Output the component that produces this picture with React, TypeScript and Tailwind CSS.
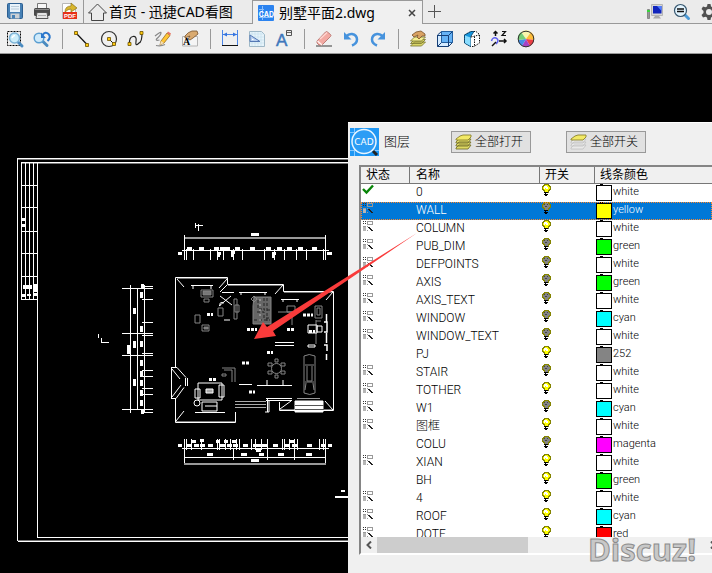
import { useState, type ReactNode } from "react";

const icons: Record<string, ReactNode> = {
  save: (
    <>
      <path d="M2.500 3.500q0-1 1-1h13q1 0 1 1v13q0 1-1 1H4l-1.500-1.500z" fill="#4680b5" stroke="#2d5f91" />
      <rect x="5" y="3" width="10" height="8" fill="#e8f2fa" />
      <path d="M6 5.500h8M6 8h8" stroke="#b8cad8" />
      <path d="M5.500 12.500h9V17.500h-9z" fill="#cbd0d5" />
      <path d="M7 14h3v3.500H7z" fill="#4680b5" />
    </>
  ),
  print: (
    <>
      <path d="M5.500 2.500h9V8h-9z" fill="#f7f7f7" stroke="#777" />
      <rect x="2" y="7" width="16" height="8" rx="1.500" fill="#4a4a4a" />
      <path d="M3 8.500h14" stroke="#8a8a8a" />
      <path d="M5 11.500h10l1 6H4z" fill="#e4e4e4" stroke="#555" />
      <path d="M6 14.500h8" stroke="#aaa" />
    </>
  ),
  pdf: (
    <>
      <path d="M3.500 2.500h9l4 4v11h-13z" fill="#fff" stroke="#b8b8b8" />
      <rect x="4" y="11" width="14" height="7" fill="#e83018" />
      <text x="5" y="17" fontSize="6" fontWeight="bold" fill="#fff" fontFamily="Liberation Sans, sans-serif">PDF</text>
      <path d="M6 11q0-6 6-6V2l6 5-6 4V8q-3 0-6 3z" fill="#d9b62c" stroke="#8b741b" strokeWidth=".7" />
    </>
  ),
  zoomWindow: (
    <>
      <path d="M2.500 2.500h13v14h-13z" fill="none" stroke="#000" strokeDasharray="2 1" />
      <path d="m13 13 4 4" stroke="#4b8bc0" strokeWidth="3" strokeLinecap="round" />
      <circle cx="9.500" cy="9" r="5" fill="#cdeefa" stroke="#7db3d6" strokeWidth="1.500" />
      <path d="M7 9q1-2.500 3-2.500" stroke="#fff" fill="none" strokeWidth="1.500" />
    </>
  ),
  zoomPrev: (
    <>
      <path d="m11 12.500 4 4" stroke="#4b8bc0" strokeWidth="3" strokeLinecap="round" />
      <circle cx="7" cy="9" r="4.800" fill="#cfeafa" stroke="#5a9ed1" strokeWidth="1.500" />
      <path d="M10.500 6q3-4 6-1t-1 7" fill="none" stroke="#2c78cc" strokeWidth="2" />
      <path d="M9 3.500V9h5z" fill="#2c78cc" />
    </>
  ),
  line: (
    <>
      <path d="m4 4 11 11.500" stroke="#111" strokeWidth="1.200" />
      <path d="M2.500 2.500h3v3h-3zM13.500 14.500h3v3h-3z" fill="#ffc90e" stroke="#6c5300" strokeWidth=".8" />
    </>
  ),
  circle: (
    <>
      <circle cx="10" cy="10" r="7.500" fill="none" stroke="#333" strokeWidth="1.200" />
      <path d="m10 10 5 5" stroke="#111" />
      <path d="M8.500 8.500h3v3h-3zM13.500 13.500h3v3h-3z" fill="#ffc90e" stroke="#6c5300" strokeWidth=".8" />
    </>
  ),
  curve: (
    <>
      <path d="M3.500 15Q3 8 7 7.500t3 5 3 1.500q3-1 3-9.500" fill="none" stroke="#222" strokeWidth="1.200" />
      <path d="M2 13.500h3v3H2zM14 2.500h3v3h-3z" fill="#ffc90e" stroke="#6c5300" strokeWidth=".8" />
    </>
  ),
  pencil: (
    <>
      <path d="M2 7q6-5 6-3T3.500 10q-1 2 3 1M3 16.500q5 1 9-1" fill="none" stroke="#888" strokeWidth="1.200" />
      <path d="m8 12 6-8 3 2.500-6 7.500-4 2z" fill="#ffc636" stroke="#9b6c20" strokeWidth=".8" />
      <path d="m14 4 1-1.500 3 2L17 6.500z" fill="#e67462" />
      <path d="m8 12 3 2-4 2z" fill="#f4dfb8" />
    </>
  ),
  textEdit: (
    <>
      <path d="M2.500 7.500h15v9.500h-15z" fill="#f5f5f5" stroke="#b4b4b4" />
      <path d="M5 7q3-4 7-5h5l1 3-5 4-3 2-2-1 2-3-5 2z" fill="#d9aa70" stroke="#77532f" strokeWidth=".8" />
      <text x="3" y="16" fontSize="10" fontWeight="bold" fontFamily="Liberation Serif, serif">A</text>
    </>
  ),
  dimension: (
    <>
      <path d="M2.500 1v16M17.500 1v16M3 5.500h14" stroke="#4a86e8" />
      <path d="m3 5.500 4-2v4zM17 5.500l-4-2v4z" fill="#3675df" />
      <path d="M2 16.500h16" stroke="#111" />
    </>
  ),
  area: (
    <>
      <path d="M2.500 2.500h12l3 3v12h-15z" fill="#e6f3fa" stroke="#9fb8c7" />
      <path d="M5 3v14M8 3v14M11 3v14M14 3v14M3 5h14M3 8h14M3 11h14M3 14h14" stroke="#bed9e8" strokeWidth=".5" />
      <path d="M3 6v6.500h10z" fill="#b8cfef" stroke="#5578b4" />
      <path d="M5 9.500V11h2.500z" fill="#fff" />
    </>
  ),
  label: (
    <>
      <text x="2" y="17" fontSize="17" fill="#4078bc" stroke="#4078bc" strokeWidth=".5" fontFamily="Liberation Sans, sans-serif">A</text>
      <path d="M12.500 1.500h5v5h-5z" fill="#eee" stroke="#555" />
      <path d="M13 3.500h4" stroke="#666" />
    </>
  ),
  eraser: (
    <>
      <path d="M2 17h16" stroke="#777" strokeWidth="1.500" />
      <path d="m3 12 8.500-9q1-1 2 0l3 2.500q1 1 0 2L8 16H5l-2-2z" fill="#f3aaa3" stroke="#b06b66" strokeWidth=".8" />
      <path d="m3.500 12 4.500 4" stroke="#fff0ee" strokeWidth="1.500" />
      <path d="m6 10 7-6.500" stroke="#ffd6d1" strokeWidth="1.500" />
    </>
  ),
  undo: (
    <>
      <path d="M5 7.500q3-3 6-2.500 5 1 5 5.500 0 4-5 6" fill="none" stroke="#4793dd" strokeWidth="2.500" />
      <path d="M3 3v7.500h7.500z" fill="#4793dd" />
    </>
  ),
  redo: (
    <>
      <path d="M15 7.500q-3-3-6-2.500-5 1-5 5.500 0 4 5 6" fill="none" stroke="#4793dd" strokeWidth="2.500" />
      <path d="M17 3v7.500H9.500z" fill="#4793dd" />
    </>
  ),
  layers: (
    <>
      <path d="m2.500 17 4-4h11l-4 4zM2.500 14.500l4-4h11l-4 4z" fill="#d9d568" stroke="#77732d" strokeWidth=".8" />
      <path d="m2.500 12 4-4h11l-4 4z" fill="#f4ee91" stroke="#77732d" strokeWidth=".8" />
      <path d="m4 6 4-3 5-1 4 3v2h-3l-3 3-2-2 1-2-4 2z" fill="#d9a263" stroke="#775027" strokeWidth=".8" />
    </>
  ),
  box: (
    <>
      <path d="m2.500 6 4-3.500h11v11l-4 4h-11z" fill="#d5ebff" stroke="#163f77" />
      <path d="M6.500 2.500h11v11h-11z" fill="#66b2f5" stroke="#2460a0" />
      <path d="M2.500 6.500h11v11M13.500 6.500l4-4M2.500 17.500l4-4" fill="none" stroke="#163f77" />
    </>
  ),
  cube: (
    <>
      <path d="M2.500 6 9 2.500h5l3.500 3V14L12 17.500H9L2.500 14z" fill="#fff" stroke="#111" strokeDasharray="1.500 1" />
      <path d="M2.500 6 9 2.500h3L8.500 8v9.500L2.500 14z" fill="#1596dd" stroke="#053f68" strokeWidth=".8" />
      <path d="m3 6.500 5.500 2v8.500L3 14z" fill="#8addff" />
      <path d="m9 8 8-2M12.500 7.500V17" fill="none" stroke="#111" strokeDasharray="1.500 1" />
    </>
  ),
  axis: (
    <>
      <path d="M6.500 7V2.500M4.500 4.500l2-2 2 2M10 12h7M15 10l2 2-2 2" fill="none" stroke="#111" strokeWidth="1.500" />
      <path d="M13 2.500h3.500L13 6.500h4" fill="none" stroke="#111" strokeWidth="1.200" />
      <path d="M2.500 12q1-4 4.500-3 4 2 0 6" fill="none" stroke="#5a5cf0" strokeWidth="1.500" />
      <path d="m3 17 4-4" stroke="#111" strokeWidth="1.500" />
    </>
  ),
  colors: (
    <>
      <path d="M10 10 5 3a8 8 0 0 1 10 0z" fill="#faf6ac" />
      <path d="m10 10 5-7a8 8 0 0 1 3 8z" fill="#ffbd38" />
      <path d="m10 10 8 1a8 8 0 0 1-4 6z" fill="#ed3f45" />
      <path d="m10 10 4 7a8 8 0 0 1-8 0z" fill="#a543c4" />
      <path d="m10 10-4 7a8 8 0 0 1-4-6z" fill="#448fe6" />
      <path d="m10 10-8 1a8 8 0 0 1 3-8z" fill="#77cf77" />
      <circle cx="10" cy="10" r="7.800" fill="none" stroke="#333" />
    </>
  ),
  computer: (
    <>
      <path d="M6.500 2.500h11v11h-11z" fill="#d6d6d6" stroke="#b5b5b5" />
      <path d="M8 4h8.500v7.500H8z" fill="#1024bc" />
      <path d="M12 4h4.500v5z" fill="#4f7dff" />
      <path d="M10 14h4l2 2.500H8z" fill="#aaa" />
      <path d="M2.500 7.500h2v9h-2z" fill="#999" stroke="#888" />
      <path d="M2 8h3v2H2z" fill="#39d43c" />
    </>
  ),
  search: (
    <>
      <path d="m13 13 3.500 3.500" stroke="#4b9bd8" strokeWidth="3" strokeLinecap="round" />
      <circle cx="8.500" cy="8.500" r="6" fill="#e4f5ff" stroke="#36566e" strokeWidth="1.200" />
      <path d="M5 7h7M5 9.500h7" stroke="#111" strokeWidth="1.500" />
    </>
  ),
  settings: (
    <>
      <path d="M8.500 2h3l.5 2.500 1.500.8 2.500-.8 1.500 2.500-2 2v2l2 2-1.500 2.500-2.500-.8-1.500.8-.5 2.500h-3L8 15.500l-1.500-.8-2.500.8L2.500 13l2-2V9l-2-2L4 4.500l2.500.8L8 4.500z" fill="#505050" />
      <circle cx="10" cy="10" r="3" fill="#ebebeb" />
    </>
  ),
};

const toolbar: [string, string][][] = [
  [["zoomWindow", "窗口缩放"], ["zoomPrev", "上一视图"]],
  [["line", "直线"], ["circle", "圆"], ["curve", "曲线"], ["pencil", "画笔"], ["textEdit", "文字"]],
  [["dimension", "标注"], ["area", "面积"], ["label", "标签"]],
  [["eraser", "删除"], ["undo", "撤销"], ["redo", "重做"]],
  [["layers", "图层"], ["box", "视图"], ["cube", "三维"], ["axis", "坐标"], ["colors", "颜色"]],
];

interface Layer {
  name: string;
  color: string;
  fill: string;
  on?: boolean;
  used?: boolean;
}

const layers: Layer[] = [
  { name: "0", color: "white", fill: "#fff", on: true },
  { name: "WALL", color: "yellow", fill: "#ff0", used: true },
  { name: "COLUMN", color: "white", fill: "#fff", on: true, used: true },
  { name: "PUB_DIM", color: "green", fill: "#0f0", used: true },
  { name: "DEFPOINTS", color: "white", fill: "#fff", used: true },
  { name: "AXIS", color: "green", fill: "#0f0", used: true },
  { name: "AXIS_TEXT", color: "white", fill: "#fff", used: true },
  { name: "WINDOW", color: "cyan", fill: "#0ff", used: true },
  { name: "WINDOW_TEXT", color: "white", fill: "#fff", used: true },
  { name: "PJ", color: "252", fill: "#848484", on: true },
  { name: "STAIR", color: "white", fill: "#fff", used: true },
  { name: "TOTHER", color: "white", fill: "#fff", on: true, used: true },
  { name: "W1", color: "cyan", fill: "#0ff", used: true },
  { name: "图框", color: "white", fill: "#fff", on: true, used: true },
  { name: "COLU", color: "magenta", fill: "#f0f" },
  { name: "XIAN", color: "white", fill: "#fff", on: true, used: true },
  { name: "BH", color: "green", fill: "#0f0", on: true },
  { name: "4", color: "white", fill: "#fff", on: true, used: true },
  { name: "ROOF", color: "cyan", fill: "#0ff", on: true, used: true },
  { name: "DOTE", color: "red", fill: "#f00", on: true, used: true },
];

function IconButton({ icon, label }: { icon: string; label: string }) {
  return (
    <button type="button" aria-label={label} className="size-5 shrink-0">
      <svg viewBox="0 0 20 20" className="size-5">{icons[icon]}</svg>
    </button>
  );
}

function CadLogo({ className }: { className: string }) {
  return (
    <svg viewBox="0 0 29 28" className={className}>
      <path d="M0 0h29v28H0z" fill="#1f97f4" />
      <path d="M4.500 0v28M0 22.500h29M0 4.500h8" stroke="#83c8ff" />
      <circle cx="14" cy="13.500" r="12" fill="#2d9df5" stroke="#e8f5ff" strokeWidth="1.500" />
      <path d="m23 23 4 4" stroke="#222" strokeWidth="3" />
      <text x="14" y="17" textAnchor="middle" fontSize="9" fontWeight="500" fill="#fff" fontFamily="DejaVu Sans, sans-serif">CAD</text>
    </svg>
  );
}

function TabLogo() {
  return (
    <svg viewBox="0 0 16 16" className="size-4 shrink-0">
      <rect width="16" height="16" rx="1" fill="#2b83f0" />
      <path d="M4.500 1v14M1 4.500h5M1 12.500h14" stroke="#8cc0fb" />
      <text x="8.500" y="12" textAnchor="middle" fontSize="7" fontWeight="bold" fill="#fff" fontFamily="Inter, sans-serif">CAD</text>
    </svg>
  );
}

function Bulb({ on }: { on?: boolean }) {
  return (
    <svg viewBox="0 0 10 13" className="block h-[13px] w-2.5" shapeRendering="crispEdges">
      <path d="M3 0h4v1h1v1h1v3H8v1H7v2H3V6H2V5H1V2h1V1h1z" fill={on ? "#ff0" : "#848484"} stroke="#848400" strokeWidth="1" />
      {on ? <path d="M3 2h3v1h1v2H5V4H4v1H3z" fill="#fff" /> : <path d="M3 2h1v1H3zM6 2h1v1H6zM4 4h2v1H4z" fill="#444" />}
      <path d="M3 8h4v1H5v1h2v1H6v1H4v-1H3v-1h1V9H3z" fill="#000" />
    </svg>
  );
}

function Status({ layer, first }: { layer: Layer; first: boolean }) {
  if (first) {
    return (
      <svg viewBox="0 0 12 12" className="block size-3">
        <path d="m1 5 3.500 3.500L11 1.500" fill="none" stroke="#078507" strokeWidth="2.400" />
      </svg>
    );
  }
  if (!layer.used) return null;
  return (
    <svg viewBox="0 0 12 12" className="block size-3" shapeRendering="crispEdges">
      <path d="M1 1h1v1H1zM3 1h1v1H3zM1 3h1v1H1zM3 3h1v1H3z" fill="#333" />
      <path d="M5.500 1.500h5v3h-5z" fill="none" stroke="#999" />
      <path d="M1 7h3v4H1z" fill="#b5b5b5" />
      <path d="M1 6h3v1H1zM5 6h1v1H5zM5 10h1v1H5z" fill="#999" />
      <path d="M6 7h2v1h1v1h1v1h1v1H9v-1H8V9H7V8H6z" fill="#222" />
    </svg>
  );
}

function StackIcon({ dim }: { dim?: boolean }) {
  const sheet = dim ? "#e9e9e9" : "#ded963";
  const edge = dim ? "#c4c4c4" : "#77732d";
  return (
    <svg viewBox="0 0 17 16" className="h-4 w-[17px] shrink-0">
      <path d="m1 14 3-3h12l-3 4H1zM1 11l3-3h12l-3 4H1zM1 8l3-3h12l-3 4H1z" fill={sheet} stroke={edge} strokeWidth=".9" />
      <path d="m1 5 4-3 3-1h8v2l-3 3H1z" fill="#f2e966" stroke="#8b812c" strokeWidth=".9" />
    </svg>
  );
}

const topTicks = [184, 186, 193, 210, 217, 223, 233, 242, 264, 274, 284, 296, 306, 323, 325];
const topLabels = [187, 199, 214, 220, 225, 235, 250, 266, 277, 287, 298, 312];
const bottomTicks = [184, 186, 191, 201, 217, 219, 225, 230, 236, 239, 251, 255, 261, 267, 282, 284, 289, 294, 297, 319, 323, 325];
const bottomLabels = [187, 194, 200, 208, 220, 227, 233, 243, 253, 258, 263, 273, 285, 292, 307, 321];
const sideTicks = [286, 299, 322, 335, 353, 370, 376, 388, 394, 412];
const sideLabels = [292, 326, 341, 360, 371, 380, 390, 400];

function FloorPlan() {
  return (
    <svg viewBox="0 54 712 519" className="absolute left-0 top-0 h-[519px] w-[712px]" fill="none" stroke="#fff">
      {/* sheet frame and title strip */}
      <g shapeRendering="crispEdges">
        <path d="M18 159.500h682M22 163.500h678M18 540.500h682" stroke="#777" />
        <path d="M17.500 541V158.500H700M17.500 541H700M21.500 300V162.500H700M37.500 163v374H700" />
        <path d="M25.500 163v137M29.500 163v137M33.500 163v137" />
        <path d="M21 185.500h16M21 207.500h16M21 231.500h16M21 253.500h16M21 276.500h16M21 299.500h16" />
        <path d="M22 218h3v3h-3zM22 224h3v3h-3zM23 285h9v4h-9zM22 294h3v3h-3zM27 294h4v2h-4zM34 284h3v4h-3zM34 288h3v4h-3zM34 293h3v3h-3z" fill="#fff" stroke="none" />
        <path d="M335 497h13M341 491h4" strokeWidth="2" />
      </g>

      {/* top and bottom dimension chains */}
      <g shapeRendering="crispEdges">
        <path d="M184 238h142" stroke="#999" strokeWidth="2" />
        <path d="M184.500 235v25M325.500 235v25M182 250.500h147M195.500 223v5M196 225.500h7M198.500 224v7" />
        {topTicks.map((x) => <path key={x} d={`M${x + 0.5} 249v11`} />)}
        {topLabels.map((x) => <path key={x} d={`M${x} 248h5`} strokeWidth="3" />)}
        <path d="M251 234.500h8M178 253.500h4M327 253.500h5M217 253h4M231 252h4M217 255.500h3M231 255.500h3M272 253h4M272 256h3" strokeWidth="3" />
        <path d="M182 448.500h147M184 457.500h142M184.500 439v26M325.500 439v26M233.500 448v12M267.500 448v12M294.500 448v12" />
        <path d="M184 464h142" stroke="#999" strokeWidth="2" />
        {bottomTicks.map((x) => <path key={x} d={`M${x + 0.5} 439v11`} />)}
        {bottomLabels.map((x) => <path key={x} d={`M${x} 445.500h5`} strokeWidth="3" />)}
        <path d="M178 445.500h4M191 441.500h5M200 440.500h4M216 441.500h4M224 441.500h4M232 441.500h4M256 450.500h5M290 441.500h5M328 445.500h4M207 454.500h6M241 454.500h6M259 454.500h5M278 454.500h6M306 454.500h6M251 460.500h8" strokeWidth="3" />
      </g>

      {/* left dimension chain */}
      <g shapeRendering="crispEdges">
        <path d="M130.500 285v128M137.500 288v122M144.500 285v128M122 288.500h31M122 333.500h31M122 355.500h31M122 409.500h31" />
        {sideTicks.map((y) => <path key={y} d={`M142 ${y + 0.5}h11`} />)}
        {sideLabels.map((y) => <path key={y} d={`M141.500 ${y}v6`} strokeWidth="3" />)}
        <path d="M134.500 308v6M134.500 341v7M134.500 379v7M128.500 345v9M142 284v4M142 409v5" strokeWidth="3" />
        <path d="M98.500 334v4M101.500 338v4h7" />
      </g>

      {/* walls */}
      <g>
        <path d="M177 278.500h50M228 285.500h55M284 292.500h49M176 421.500h59M280 409.500h53" stroke="#777" />
        <path d="M175.500 367V277.500h52V284.500H283.500v7H333.500V410.500H279.500V402M175.500 398v24.500H235.500V412" />
        <path d="m177 279 7 8M227 279l-8 9M227 285l-7 7M283 285l-8 9M333 292l-7 8M176 421l8-10M280 409l11-8M333 410l-8-9" />
        <path d="M171.500 368v30M171 367.500h6l9 10M171 398.500h5l8-11M172 369l8 10M172 397l9-12M185.500 378v8M187.500 378v8" />
        <path d="M191 285.500h22M193 285v4M211 285v4M222 292.500h12M239 292.500h28M241 292v3M265 292v3M281 299.500h18M283 299v3M297 299v3" />
        <path d="M195 412.500h30M257 385.500h35M267 380v5M283 380v5M239 384.500h13M275 342.500h19M275 345.500h19" />
        <path d="M266 398.500h26M266 400.500h26M267.500 398v14M269 400v12h-4" />
        <path d="M235 401.500h31M235 404.500h31M235 407.500h31" stroke="#aaa" />
        <path d="M295 401h28v11h-28z" fill="#fff" />
        <path d="M295 405.500h29M295 409.500h29" stroke="#555" />
        <path d="M297 398.500h23" stroke="#999" />
        <path d="M326.500 314v8M324 322h3v10h-3M326.500 333v10M324 345h3v6M326.500 354v6" strokeWidth="1.500" />
      </g>

      {/* furniture */}
      <g stroke="#858585">
        <path d="M201 290h12v7h-12zM204 299h5v3h-5zM195 315h5v8h-5zM202 325h7v6h-7zM218 308h5v8h-5zM234 299h3v20h-3zM235 305h4v7h-4z" />
        <path d="M203 291h8v4h-8zM204 327h4v2h-4z" fill="#777" />
        <path d="M254 297h17v27h-18v-18z" fill="#666" />
        <path d="M258 300v9h4M264 298v12h7M257 312h7v6h6M254 320h16M267 298v25" stroke="#222" strokeDasharray="3 2" />
        <path d="M260 299v24" stroke="#bbb" strokeDasharray="2 3" />
        <path d="m251 299 3-3 3 3-3 3zM278 312h14v13M287 306h8v6h-8zM315 306h7v12h-7zM317 308h3v7h-3zM316 320v24M321 321h-5" />
        <circle cx="276.500" cy="368.500" r="5" />
        <path d="M275 359h3v3h-3zM275 375h3v3h-3zM268 363h4v3h-4zM281 363h4v3h-4zM268 371h4v3h-4zM281 371h4v3h-4z" />
        <path d="M304 356q5-3 11 0v37q-5 3-11 0zM305 365h9M305 382h9M307 366v15h5v-15M306 383l-1 7M313 383l1 7" />
        <path d="M222 368h13v14M224 370h8v12M222 374h4v2h-4z" />
      </g>
      <g>
        <path d="m220 296 12 9M231 296l-12 10M224 303q-5-2-4 3M224 320h6M198 383h24v17h-24zM195 389h5v9h-5zM219 385h5v12h-5z" />
        <circle cx="197" cy="403" r="3" />
        <path d="M202 402h15v9h-15zM205 406h12" />
        <path d="M206 389h7v4h-7z" fill="#aaa" />
        <path d="M308 325h9v8h-9zM317 326h5v6h-5zM308 345h7v2h-7z" />
        <path d="M207 314.500h6M247 329.500h10M287 329.500h7M303 315h10M267 352.500h6M242 363h7M209 379.500h7M249 392h6M309 331.500h6" strokeWidth="3" strokeDasharray="3 1" />
      </g>
    </svg>
  );
}

function LayerPanel() {
  const [selected, setSelected] = useState("WALL");

  return (
    <section className="absolute bottom-0 left-[348px] right-0 top-[68px] flex flex-col overflow-hidden border-t border-white bg-[#f0f0f0]">
      <div className="flex h-[42px] shrink-0 items-center pb-1 pl-0.5">
        <CadLogo className="h-7 w-[29px] shrink-0" />
        <h2 className="ml-[5px] w-[67px] shrink-0 text-[13px]">图层</h2>
        <button type="button" className="flex h-[22px] w-20 shrink-0 items-center gap-[3px] border border-[#999] bg-[#e1e1e1] pl-[3px] text-xs whitespace-nowrap">
          <StackIcon />
          全部打开
        </button>
        <button type="button" className="ml-[35px] flex h-[22px] w-20 shrink-0 items-center gap-[3px] border border-[#999] bg-[#e1e1e1] pl-[3px] text-xs whitespace-nowrap">
          <StackIcon dim />
          全部开关
        </button>
      </div>

      <div className="mb-[18px] ml-[11px] flex min-h-0 flex-1 flex-col border-b-2 border-l-2 border-t-2 border-[#858585] border-b-white bg-white">
        <div className="min-h-0 flex-1 overflow-hidden">
          <table className="w-full table-fixed border-separate border-spacing-0 text-left">
            <thead className="text-xs">
              <tr className="h-[17px] bg-[#f0f0f0] leading-4">
                <th className="w-[49px] border-b border-r border-[#777] p-0 pl-[5px] font-normal">状态</th>
                <th className="w-[130px] border-b border-r border-[#777] p-0 pl-1.5 font-normal">名称</th>
                <th className="w-[55px] border-b border-r border-[#777] p-0 pl-[5px] font-normal">开关</th>
                <th className="border-b border-[#777] p-0 pl-[5px] font-normal">线条颜色</th>
              </tr>
            </thead>
            <tbody>
              {layers.map((layer, i) => (
                <tr
                  key={layer.name}
                  onClick={() => setSelected(layer.name)}
                  className={`h-[18px] align-top ${
                    layer.name === selected
                      ? "bg-[#0078d7] text-white outline-1 -outline-offset-1 outline-dotted outline-[#ff8728]"
                      : "text-black"
                  }`}
                >
                  <td className="p-0 pl-px"><Status layer={layer} first={i === 0} /></td>
                  <td className="p-0 pl-1.5 text-xs leading-4">{layer.name}</td>
                  <td className="p-0 pl-px"><Bulb on={layer.on} /></td>
                  <td className="p-0 pl-px">
                    <div className="flex h-[18px] gap-px text-[11px] leading-4">
                      <svg viewBox="0 0 16 17" className="h-[17px] w-4 shrink-0" shapeRendering="crispEdges">
                        <path d="M4 0h3v1H4z" fill="#000" />
                        <rect x=".5" y="1.500" width="15" height="15" fill={layer.fill} stroke="#000" />
                      </svg>
                      {layer.color}
                    </div>
                  </td>
                </tr>
              ))}
            </tbody>
          </table>
        </div>
        <div className="flex h-4 shrink-0 justify-between bg-[#f0f0f0]">
          <div className="flex">
            <button type="button" aria-label="向左滚动" className="flex w-4 shrink-0 items-center justify-center">
              <svg viewBox="0 0 8 8" className="size-2"><path d="M6 .500 2.500 4 6 7.500" fill="none" stroke="#555" strokeWidth="2" /></svg>
            </button>
            <div className="w-[151px] bg-[#cdcdcd]" />
          </div>
          <button type="button" aria-label="向右滚动" className="-mr-1.5 flex w-2 shrink-0 items-center">
            <svg viewBox="0 0 8 8" className="size-2"><path d="M1 .500 4.500 4 1 7.500" fill="none" stroke="#555" strokeWidth="2" /></svg>
          </button>
        </div>
      </div>
    </section>
  );
}

export default function App() {
  return (
    <div className="flex min-h-screen flex-col overflow-hidden bg-black font-['Roboto','Noto_Sans_CJK_SC',sans-serif] font-light text-black">
      <header className="flex h-6 shrink-0 bg-[#ebebeb] font-['Noto_Sans','Noto_Sans_CJK_SC',sans-serif] text-sm leading-5 font-normal whitespace-nowrap">
        <div className="flex w-[84px] shrink-0 gap-[7px] border-b border-r border-[#999] pl-[5px] pt-px">
          <IconButton icon="save" label="保存" />
          <IconButton icon="print" label="打印" />
          <IconButton icon="pdf" label="导出PDF" />
        </div>
        <button type="button" className="flex w-[168px] shrink-0 items-center gap-0.5 border-b border-[#999] pl-1">
          <svg viewBox="0 0 19 18" className="h-[18px] w-[19px] shrink-0" fill="none" stroke="#444">
            <path d="M.500 10 9.500 1l9 9h-3v7.500h-12V10z" />
          </svg>
          首页 - 迅捷CAD看图
        </button>
        <div className="flex w-[171px] shrink-0 items-center border-l border-r border-t border-[#999] bg-[#f0f0f0] pl-[5px]">
          <button type="button" className="flex flex-1 items-center gap-[5px]">
            <TabLogo />
            别墅平面2.dwg
          </button>
          <button type="button" aria-label="关闭" className="mr-1.5 flex size-2 items-center">
            <svg viewBox="0 0 8 8" className="size-2"><path d="m1 1 6 6M7 1 1 7" stroke="#444" strokeWidth="1.500" /></svg>
          </button>
        </div>
        <div className="flex flex-1 items-center border-b border-[#999] pl-[5px]">
          <button type="button" aria-label="新建">
            <svg viewBox="0 0 13 13" className="size-[13px]"><path d="M6.500 0v13M0 6.500h13" stroke="#555" /></svg>
          </button>
          <div className="-mr-[7px] ml-auto flex gap-[7px]">
            <IconButton icon="computer" label="显示" />
            <IconButton icon="search" label="查找" />
            <IconButton icon="settings" label="设置" />
          </div>
        </div>
      </header>

      <div className="flex h-[30px] shrink-0 items-center gap-[7px] border-b border-[#999] bg-[#f0f0f0] pl-[5px]">
        {toolbar.map((group, i) => (
          <div key={i} className="flex items-center gap-[7px]">
            {i > 0 && <div className="ml-[3px] mr-0.5 h-5 w-px bg-[#999]" />}
            {group.map(([icon, label]) => <IconButton key={icon} icon={icon} label={label} />)}
          </div>
        ))}
      </div>

      <main className="relative flex-1 overflow-hidden">
        <FloorPlan />
        <LayerPanel />
        <svg viewBox="0 54 712 519" className="pointer-events-none absolute left-0 top-0 h-[519px] w-[712px]">
          <path d="m254 339 9-17 4 5 150-94-144 98 3 5z" fill="#f93b3b" />
        </svg>
        <div className="absolute bottom-1.5 right-4 font-['Open_Sans',sans-serif] text-[31px] leading-9 font-bold text-[#c8c8c8] [-webkit-text-stroke:1px_#8c8c8c]">Discuz!</div>
      </main>
    </div>
  );
}
